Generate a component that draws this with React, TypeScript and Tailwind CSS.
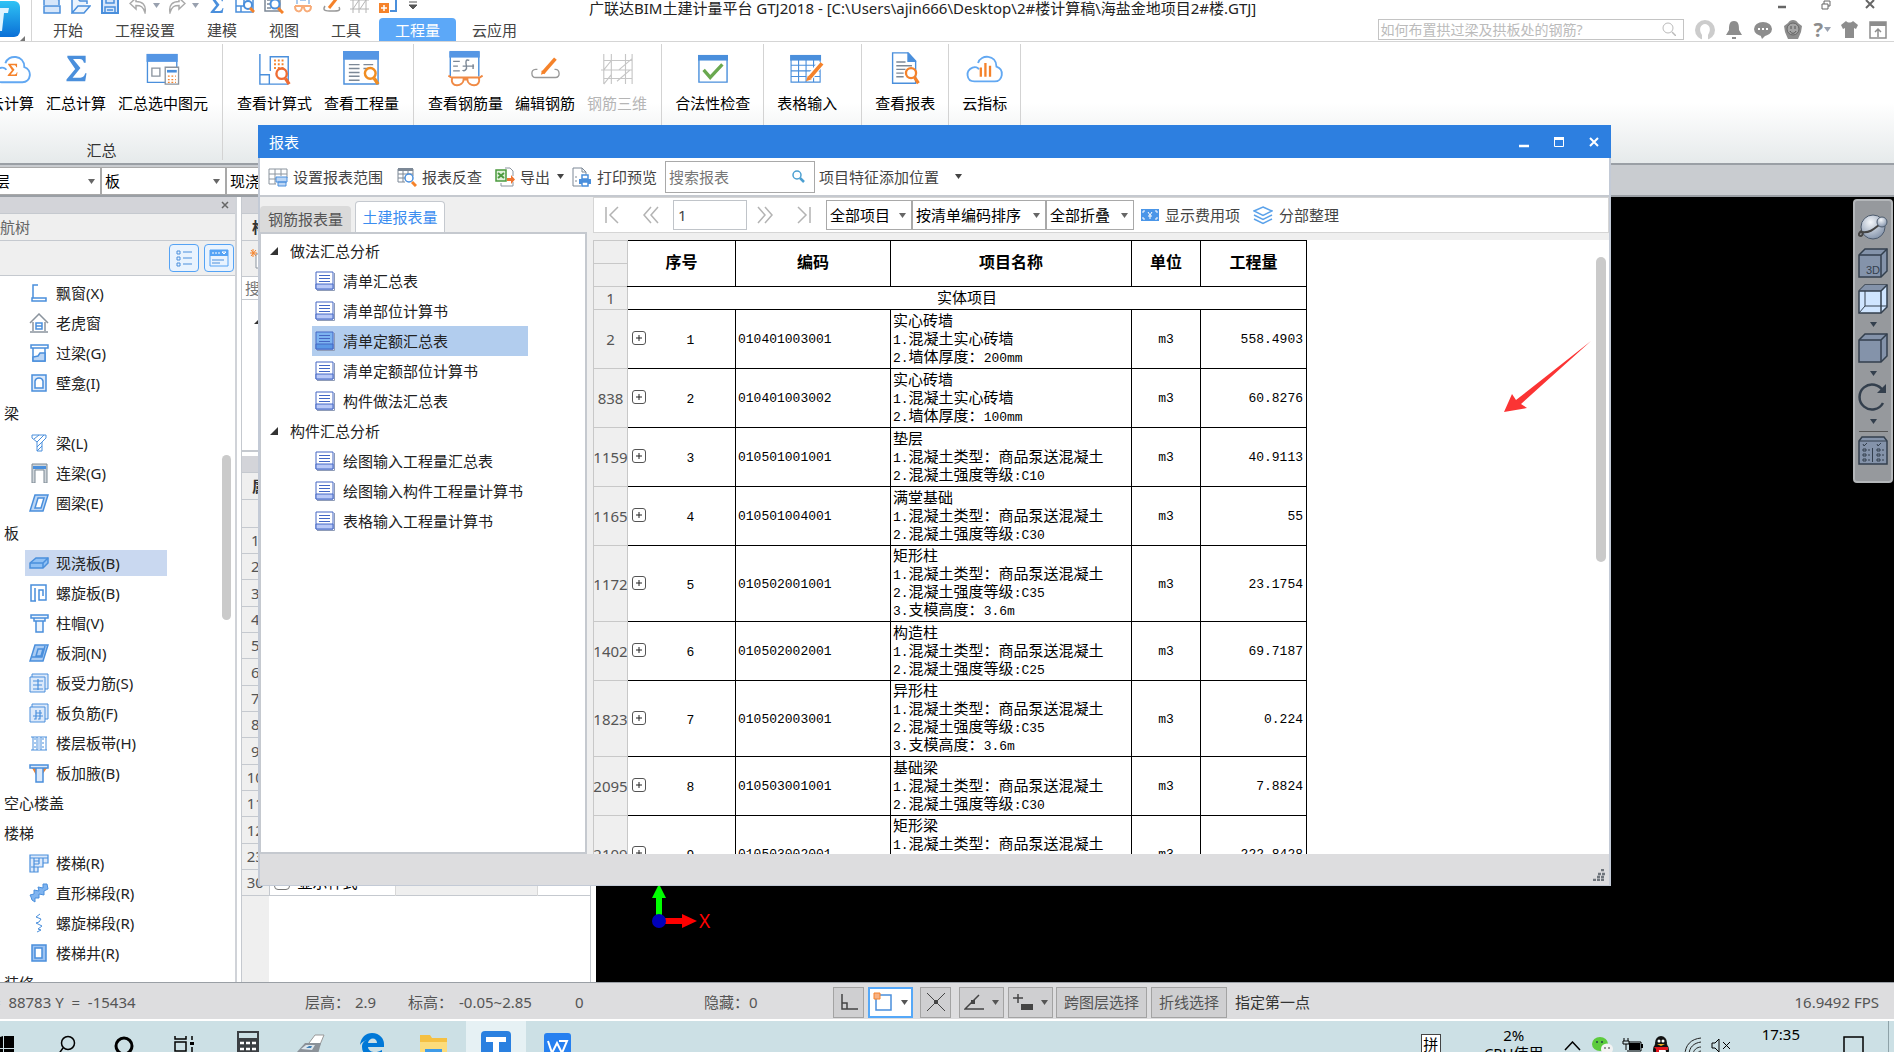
import React from 'react';
import clsx from 'clsx';

type IconProps = { className?: string };

const BLUE = '#4a8fdc';
const ORANGE = '#f5822a';

const Caret = ({ className }: IconProps) => (
  <svg className={clsx('shrink-0', className)} width="7" height="5" viewBox="0 0 7 5" aria-hidden="true">
    <path d="M0 0h7L3.5 5z" fill="currentColor" />
  </svg>
);

const Svg = ({ w = 20, h = 20, box, children, className }: { w?: number; h?: number; box?: string; children: React.ReactNode; className?: string }) => (
  <svg className={clsx('shrink-0', className)} width={w} height={h} viewBox={box ?? `0 0 ${w} ${h}`} fill="none" aria-hidden="true">
    {children}
  </svg>
);

const SIGMA = 'M2 1h21v8h-2c-.6-3-2-4.500-5-4.500H8.500L17 15 8 26h9c3 0 4.500-1.500 5.500-5H24l-1.500 9H1v-2l10-12L2 3z';

/* ---------- quick access bar ---------- */

const quickIcons: { x: React.ReactNode; gap: string }[] = [
  { gap: 'ml-0', x: <Svg w={18} h={18}><path d="M1 9V1h10l5 3v5M1 10h16v7H1z" stroke={BLUE} strokeWidth="1.5" fill="#d6e6fa" /></Svg> },
  { gap: 'ml-[10px]', x: <Svg w={20} h={18}><path d="M1 17V3h6l2 2h7v3M1 17l6-7h12l-6 7z" stroke={BLUE} strokeWidth="1.5" fill="#eaf3fd" /></Svg> },
  { gap: 'ml-[10px]', x: <Svg w={18} h={18}><path d="M1 1h16v16H1z" fill="#d6e6fa" stroke={BLUE} strokeWidth="2" /><path d="M5 1v6h8V1M4 17v-6h10v6M6 14h6" stroke={BLUE} strokeWidth="1.500" /></Svg> },
  { gap: 'ml-[10px]', x: <Svg w={18} h={18}><path d="M7 2 1 7.500 7 13v-3.500c5 0 7 1 9 7 1.500-8-3-11-9-11z" stroke="#aaa" strokeWidth="1.500" /></Svg> },
  { gap: 'ml-[6px]', x: <Caret className="text-gray-400" /> },
  { gap: 'ml-[8px]', x: <Svg w={18} h={18}><path d="m11 2 6 5.500L11 13v-3.500c-5 0-7 1-9 7C.5 8.500 5 5.500 11 5.500z" stroke="#aaa" strokeWidth="1.500" /></Svg> },
  { gap: 'ml-[6px]', x: <Caret className="text-gray-400" /> },
  { gap: 'ml-[11px]', x: <Svg w={14} h={18} box="0 0 25 31"><path d={SIGMA} fill={BLUE} /></Svg> },
  { gap: 'ml-[11px]', x: <Svg w={20} h={18}><path d="M1 0v16h17V1H9v9H1M6 10v6" stroke={BLUE} strokeWidth="1.500" /><circle cx="13" cy="9" r="4" stroke={BLUE} strokeWidth="2" fill="#fff" /><path d="m15 12 4 4" stroke={ORANGE} strokeWidth="3" /></Svg> },
  { gap: 'ml-[9px]', x: <Svg w={20} h={18}><path d="M1 0v15h15V0M3 4h4M3 8h4M3 12h4" stroke="#7c8896" strokeWidth="1.500" /><circle cx="11" cy="8" r="4.500" stroke={BLUE} strokeWidth="2" fill="#fff" /><path d="m14 12 5 5" stroke={ORANGE} strokeWidth="3" /></Svg> },
  { gap: 'ml-[10px]', x: <Svg w={18} h={18}><path d="M3 8V0h12v8M6 4h6" stroke="#8fb9e8" strokeWidth="1.500" /><path d="M1 10h16M1 10c0 7 7 7 7 1h2c0 6 7 6 7-1" stroke="#f7ab78" strokeWidth="2" /></Svg> },
  { gap: 'ml-[11px]', x: <Svg w={18} h={18}><path d="M2 10c-3 5 1 5 7 5s9 0 7-4" stroke="#999" strokeWidth="1.500" /><path d="m6 12 8-10" stroke={ORANGE} strokeWidth="3" /></Svg> },
  { gap: 'ml-[9px]', x: <Svg w={20} h={18}><path d="M3 0v17M9 0v17M16 0v17M0 4h19M0 13h19M3 13l6-9M10 13l6-9" stroke="#b4b4b4" /></Svg> },
  { gap: 'ml-[9px]', x: <Svg w={18} h={18}><path d="M10 1h7v14h-6" stroke={BLUE} strokeWidth="2" /><path d="M0 7h10v10H0z" fill={ORANGE} /><path d="M5 9v6M2 12h6" stroke="#fff" strokeWidth="1.500" /></Svg> },
];

/* ---------- ribbon ---------- */

const Lens = ({ x, y, color = ORANGE }: { x: number; y: number; color?: string }) => (
  <>
    <circle cx={x} cy={y} r="5.500" stroke={color} strokeWidth="2.500" fill="#fff" />
    <path d={`m${x + 4} ${y + 5} 4 6`} stroke={color} strokeWidth="3.500" />
  </>
);

const CLOUD = 'M9 33h22c9 0 11-13 2-16 0-13-17-14-20-4M9 33c-9 0-10-12-2-15 3-1 6 0 7 2';

const ribbonGroups = [
  {
    label: '汇总', cls: '-ml-[25px] px-2',
    items: [
      { t: '云计算', i: <Svg w={38} h={36} box="0 0 40 38"><path d={CLOUD} stroke="#62a8f2" strokeWidth="2" /><g transform="translate(15 13) scale(.45)"><path d={SIGMA} fill={ORANGE} /></g></Svg> },
      { t: '汇总计算', i: <Svg w={23} h={27} box="0 0 25 31"><path d={SIGMA} fill={BLUE} /></Svg> },
      { t: '汇总选中图元', i: <Svg w={36} h={32} box="0 0 37 36"><path d="M1 2h33v31H1z" stroke={BLUE} strokeWidth="1.500" /><path d="M0 1h35v9H0z" fill="#5596e4" /><path d="M6 17h9v9H6z" stroke="#8b949e" strokeWidth="1.500" /><path d="M21 16h15v19H21z" fill="#fff" stroke="#8b949e" strokeWidth="1.500" /><path d="M23 19h11v3H23z" fill={BLUE} /><path d="M24 26h9M24 30h9M24 33h9" stroke={ORANGE} strokeWidth="1.500" strokeDasharray="2 2" /></Svg> },
    ],
  },
  {
    label: '', cls: 'px-2',
    items: [
      { t: '查看计算式', i: <Svg w={34} h={34} box="0 0 36 36"><path d="M2 2v32h30M2 24h10v10M13 20V5h19v29" stroke={BLUE} strokeWidth="1.500" /><path d="M17 9h12M17 13h12M17 17h12" stroke={ORANGE} strokeWidth="2" strokeDasharray="2 2" /><Lens x={25} y={23} color="#ef6c33" /></Svg> },
      { t: '查看工程量', i: <Svg w={37} h={37} box="0 0 38 38"><path d="M1 2h35v33H1z" stroke={BLUE} strokeWidth="1.500" /><path d="M0 1h37v9H0z" fill="#5596e4" /><path d="M6 15h11M6 19h11M6 23h11M6 27h11M6 31h11M21 15h10M21 19h6" stroke="#7c8896" strokeWidth="1.500" /><Lens x={28} y={24} color="#f08d22" /></Svg> },
    ],
  },
  {
    label: '', cls: 'px-2',
    items: [
      { t: '查看钢筋量', i: <Svg w={37} h={38} box="0 0 38 40"><path d="M3 2v26M33 2v26" stroke={BLUE} strokeWidth="1.500" /><path d="M2 1h32v7H2z" fill="#5596e4" /><path d="M6 12h7M6 17h5M6 22h7M16 17h12M23 11c-4-2-4 2-3 6s-3 6-4 4M27 15v5" stroke="#7c8896" strokeWidth="1.500" /><path d="M4 29h30l3-2M4 29l-3-2M5 29c-3 11 12 10 12 2h4c0 8 15 9 12-2" stroke="#f08a45" strokeWidth="2" /></Svg> },
      { t: '编辑钢筋', i: <Svg w={31} h={27} box="0 0 32 30"><path d="M7 16H5c-6 0-5 9 0 9h22c6 0 5-9 0-9h-1" stroke="#999" strokeWidth="1.500" /><path d="m13 20 14-16" stroke={ORANGE} strokeWidth="4" /><path d="m11 22 1-5 4 3z" fill={ORANGE} /></Svg> },
      { t: '钢筋三维', off: true, i: <Svg w={36} h={34} box="0 0 36 36"><path d="M4 2v32M12 2v32M27 2v32M34 2v32M4 9h30M1 19h33M4 28h30M4 19l8-10M4 34l8-10M20 19l14-12M18 31l14-12" stroke="#c6c6c6" strokeWidth="1.200" /></Svg> },
    ],
  },
  {
    label: '', cls: 'px-[7px]',
    items: [{ t: '合法性检查', i: <Svg w={32} h={30} box="0 0 34 32"><path d="M2 2h30v28H2z" stroke={BLUE} strokeWidth="1.500" /><path d="M1 1h32v6H1z" fill={BLUE} /><path d="m7 17 7 8 13-14" stroke="#6aa84f" strokeWidth="3.500" /></Svg> }],
  },
  {
    label: '', cls: 'pl-[7px] pr-[18px]',
    items: [{ t: '表格输入', i: <Svg w={36} h={30} box="0 0 36 32"><path d="M1 2h31v28H1zM1 12h31M1 18h31M1 24h31M9 6v24M17 6v24M25 6v24" stroke={BLUE} strokeWidth="1.200" /><path d="M0 1h33v6H0z" fill={BLUE} /><path d="m20 26 13-16" stroke="#fff" strokeWidth="7" /><path d="m21 25 13-15" stroke={ORANGE} strokeWidth="4" /><path d="m17 29 2-6 4 4z" fill={ORANGE} /></Svg> }],
  },
  {
    label: '', cls: 'px-[7px]',
    items: [{ t: '查看报表', i: <Svg w={31} h={35} box="0 0 32 38"><path d="M2 2h17l8 9v24H2z" stroke={BLUE} strokeWidth="1.500" /><path d="M18 1v11h10z" fill={BLUE} /><path d="M6 12h10M6 16h17M6 20h10M6 24h8M6 28h8" stroke="#7c8896" strokeWidth="1.500" /><Lens x={22} y={24} /></Svg> }],
  },
  {
    label: '', cls: 'px-[7px]',
    items: [{ t: '云指标', i: <Svg w={39} h={35} box="0 0 40 38"><path d={CLOUD} stroke="#62a8f2" strokeWidth="2" /><path d="M16 18v10M21 13v15M26 16v12" stroke={ORANGE} strokeWidth="2.500" /></Svg> }],
  },
];

const ribbonTabs = ['开始', '工程设置', '建模', '视图', '工具', '工程量', '云应用'];

/* ---------- navigation tree ---------- */

const S = { stroke: BLUE, strokeWidth: 1.5 };

const navItems: { t: string; i?: React.ReactNode; on?: boolean }[] = [
  { t: '飘窗(X)', i: <path d="M9 2H4v13M3 15h14v3H3z" {...S} /> },
  { t: '老虎窗', i: <><path d="m1 10 9-9 9 9M4 9v9M16 9v9M1 19h18" stroke="#8b949e" strokeWidth="1.5" /><path d="M7 10h6v6H7zM7 13h6" {...S} /></> },
  { t: '过梁(G)', i: <><path d="M2 2h17v3H2zM4 5v13h12V5" {...S} /><path d="M4 18v-4l5-1 2-3h5v8z" fill="#bcd6f5" {...S} /></> },
  { t: '壁龛(I)', i: <><path d="M3 2h14v16H3z" fill="#dce9fa" {...S} /><path d="M6 15V8c1-4 7-4 8 0v7z" fill="#fff" {...S} /></> },
  { t: '梁' },
  { t: '梁(L)', i: <path d="M3 2h14v3l-4 4v9H8V9L3 5zM5 6l5-4M8 9l7-7M8 14l5-5M8 18l5-5" stroke={BLUE} /> },
  { t: '连梁(G)', i: <><path d="M3 1h15v19h-3V7H6v13H3z" fill="#cfd5da" stroke="#7d8994" /><path d="M4 3h13v3H4z" fill={BLUE} /></> },
  { t: '圈梁(E)', i: <><path d="M6 2h13l-5 16H1z" fill="#bcd6f5" {...S} /><path d="M9 5h6l-3 10H6z" fill="#fff" {...S} /></> },
  { t: '板' },
  { t: '现浇板(B)', on: true, i: <><path d="m1 10 6-5h12v5l-5 5H1z" fill="#8fc0f5" {...S} /><path d="M1 10h13l5-5M14 10v5" {...S} /></> },
  { t: '螺旋板(B)', i: <path d="M7 18H2V2h15v15h-7V7h4v6M6 18V5" {...S} /> },
  { t: '柱帽(V)', i: <path d="M2 2h17v3H2zM5 5v3h11V5M7 8v11h7V8" fill="#eef5fd" {...S} /> },
  { t: '板洞(N)', i: <><path d="M6 2h13l-5 16H1z" fill="#a9cbf3" {...S} /><path d="M9 6h5l-2 7H7zM3 14h10l3-11" {...S} /></> },
  { t: '板受力筋(S)', i: <><path d="M3 4V1h16v15h-3" fill="#dce9fa" stroke={BLUE} /><path d="M1 4h15v15H1z" fill="#dce9fa" stroke={BLUE} /><path d="M4 8h10M4 12h9M4 16h10M9 6v11" stroke={BLUE} strokeWidth="1.200" /></> },
  { t: '板负筋(F)', i: <><path d="M3 4V1h16v15h-3" fill="#dce9fa" stroke={BLUE} /><path d="M1 4h15v15H1z" fill="#dce9fa" stroke={BLUE} /><path d="M4 13h10M7 7v9H5M11 7v9H9M7 10h6" stroke={BLUE} strokeWidth="1.200" /></> },
  { t: '楼层板带(H)', i: <><path d="M2 4h16M2 17h16M4 4v13M8 4v13M12 4v13M17 4v13" stroke={BLUE} strokeWidth="1" /><path d="M6 5v12M14 5v12" stroke={BLUE} strokeDasharray="2 2" /><path d="M9 4h2v13H9z" fill="#bcd6f5" /></> },
  { t: '板加腋(B)', i: <><path d="M3 5h15l-5 7V6H7v6z" fill={ORANGE} /><path d="M1 2h18v3H1zM7 5v14h7V5z" fill="#dce9fa" {...S} /></> },
  { t: '空心楼盖' },
  { t: '楼梯' },
  { t: '楼梯(R)', i: <path d="M1 2h18v8h-5v4H9v5H1zM1 5h18M5 5v14M10 5v6M14 5v5M5 8h5M5 11h5M2 14h8" fill="#dce9fa" stroke={BLUE} strokeWidth="1.200" /> },
  { t: '直形梯段(R)', i: <path d="m1 12 4-1v-4l5 1-1-4 5 1V1h4l1 5-4 2v4l-5-1v4l-4 0v4l-3-2-1-3z" fill="#7fb4f0" stroke={BLUE} /> },
  { t: '螺旋梯段(R)', i: <path d="M11 1 7 4l5 2-2 3-3 1 6 3-4 3 3 1-4 2" stroke={BLUE} /> },
  { t: '楼梯井(R)', i: <><path d="M3 2h14v16H3z" fill="#9cc3f2" {...S} /><path d="M6 5h7v10H6z" fill="#fff" {...S} /></> },
  { t: '装修' },
];

const NavPanel = () => (
  <aside className="flex w-[237px] shrink-0 flex-col overflow-hidden border-r-2 border-[#d0d3d8] bg-white">
    <div className="flex h-4 items-center justify-end bg-[#d3d4d9] pr-1.5">
      <button aria-label="关闭" className="flex">
        <Svg w={8} h={8}><path d="m1 1 6 6M7 1 1 7" stroke="#666" strokeWidth="1.500" /></Svg>
      </button>
    </div>
    <h2 className="flex h-7 items-center border-y border-[#c5c9cf] bg-[#efefef] text-[#666]">
      <span className="-ml-[15px]">导航树</span>
    </h2>
    <div className="flex h-[35px] shrink-0 items-center justify-end gap-[5px] border-b border-[#c5c9cf] bg-[#efefef] pr-px">
      <button aria-label="列表" className="flex h-7 w-[30px] items-center justify-center rounded border border-[#55a3f5] bg-[#e9f3fe]">
        <Svg w={16} h={18}><path d="M1 2h3v3H1zM1 8h3v3H1zM1 14h3v3H1zM7 3h9M7 9h9M7 15h9" stroke={BLUE} /></Svg>
      </button>
      <button aria-label="窗口" className="flex h-7 w-[30px] items-center justify-center rounded border border-[#55a3f5] bg-[#e9f3fe]">
        <Svg w={20} h={18}><path d="M1 1h18v16H1z" stroke="#55a3f5" /><path d="M1 1h18v6H1z" fill="#55a3f5" /><path d="M4 3v2M7 3v2M10 3v2M13 3h4l-2 2z" stroke="#fff" /><path d="M3 11h12M3 14h8" stroke={BLUE} /></Svg>
      </button>
    </div>
    <div className="flex min-h-0 flex-1">
      <ul className="flex-1 overflow-hidden pt-0.5">
        {navItems.map((n, k) => (
          <li key={k} className={clsx('flex h-[30px] items-center', n.i ? 'pl-[25px]' : 'pl-1')}>
            {n.i ? (
              <button className={clsx('flex h-[26px] items-center gap-[7px] pl-1', n.on && 'w-[142px] bg-[#c9d8f0]')}>
                <Svg>{n.i}</Svg>
                <span>{n.t}</span>
              </button>
            ) : (
              <span>{n.t}</span>
            )}
          </li>
        ))}
      </ul>
      <div className="w-[13px] pt-[179px]">
        <div className="h-[165px] w-[9px] rounded-full bg-[#cacaca]" />
      </div>
    </div>
  </aside>
);

const propRows = ['1', '2', '3', '4', '5', '6', '7', '8', '9', '10', '11', '12', '23', '30'];

const PropertyPanel = () => (
  <section className="ml-1 flex w-[350px] shrink-0 flex-col overflow-hidden border-x border-[#c5c9cf] bg-white">
    <div className="h-4 shrink-0 bg-[#d3d4d9]" />
    <h2 className="flex h-7 shrink-0 items-center border-y border-[#c5c9cf] bg-[#efefef] pl-2.5 font-bold text-[#333]">构件列表</h2>
    <div className="flex h-[35px] shrink-0 items-center bg-[#efefef] pl-2">
      <Svg w={20}><path d="M6 5h12v14H6z" fill="#fff" stroke="#8b949e" /><path d="M3 0v8M0 4h7M1 1l5 6M6 1 1 7" stroke={ORANGE} /></Svg>
    </div>
    <input aria-label="搜索构件" placeholder="搜索构件..." className="h-6 shrink-0 border-y border-[#c5c9cf] pl-[3px] placeholder:text-[#777]" />
    <div className="h-[152px] shrink-0 border-b-2 border-[#c5c9cf] pl-3 pt-4">
      <Svg w={8} h={8}><path d="M8 0v8H0z" fill="#333" /></Svg>
    </div>
    <div className="mt-1 h-4 shrink-0 bg-[#d3d4d9]" />
    <h2 className="flex h-7 shrink-0 items-center border-y border-[#c5c9cf] bg-[#efefef] pl-2.5 font-bold text-[#333]">属性列表</h2>
    <div className="flex-1 bg-linear-to-r from-[#efefef] from-[27px] to-white to-[27px]">
      <table className="w-full table-fixed border-collapse">
        <thead>
          <tr className="h-[27px] border-b border-[#c5c9cf] bg-[#efefef]">
            <th className="w-[27px]" />
            <th className="w-[126px]" />
            <th className="w-[142px]" />
            <th />
          </tr>
        </thead>
        <tbody>
          {propRows.map(r => (
            <tr key={r} className="h-[26px] border-b border-[#c5c9cf] leading-5 text-[#555] nth-[3n]:h-[27px]">
              <td className="border-r border-[#c5c9cf] bg-[#efefef] p-0 text-center">{r}</td>
              <td className="border-r border-[#d8d8d8] p-0 text-black">
                {r === '30' && (
                  <label className="flex items-center gap-2 pl-1">
                    <input type="checkbox" className="size-4 appearance-none rounded border border-[#777] bg-white" />
                    显示样式
                  </label>
                )}
              </td>
              <td className="border-r border-[#d8d8d8] bg-[#efefef]" />
              <td />
            </tr>
          ))}
        </tbody>
      </table>
    </div>
  </section>
);

/* ---------- viewport ---------- */

const Cube = ({ glass }: { glass?: boolean }) => (
  <>
    <path d="m1 7 6-6h22v22l-6 6H1z" fill={glass ? '#cfe5ff' : '#8493aa'} stroke="#333f4d" strokeWidth="1.5" />
    {glass && <path d="m1 7 6-6h22l-6 6z" fill="#8493aa" />}
    <path d="M1 7h22v22M23 7l6-6" stroke="#333f4d" strokeWidth="1.5" />
    {glass && <path d="M7 7v15h22M7 22l-6 7" stroke="#333f4d" />}
  </>
);

const Viewport = () => (
  <main className="relative ml-[5px] flex-1 bg-black">
    <svg className="absolute bottom-[34px] left-[49px]" width="80" height="100" viewBox="0 0 80 100" aria-hidden="true">
      <path d="M14 70V46" stroke="#0f0" strokeWidth="6" />
      <path d="M14 73h24" stroke="#f00" strokeWidth="6" />
      <path d="m7 50 7-14 7 14z" fill="#0f0" />
      <path d="m37 66 15 7-15 7z" fill="#f00" />
      <circle cx="14" cy="73" r="7" fill="#00b" />
      <text x="54" y="80" fill="#f00" fontSize="19" fontFamily="Noto Sans">X</text>
    </svg>
    <div className="absolute right-px top-0.5 flex h-[284px] w-10 flex-col items-center rounded-sm border-2 border-[#b4b7ba] bg-[#96999d] pt-3 text-[#333f4d]">
      <Svg w={30} h={28}>
        <defs>
          <radialGradient id="ball" cx=".4" cy=".3" r=".8"><stop stopColor="#f4f7fb" /><stop offset="1" stopColor="#7889a2" /></radialGradient>
        </defs>
        <circle cx="15" cy="14" r="12" fill="url(#ball)" stroke="#4d5b6d" />
        <path d="M4 18c-4 2-4 5-1 5 3-1 1-4 1-4 8 1 12-3 17-7" stroke="#444" strokeWidth="2" />
        <circle cx="24" cy="9" r="5" fill="url(#ball)" stroke="#4d5b6d" />
      </Svg>
      <Svg w={30} h={30} className="mt-[7px]"><Cube /><text x="8" y="26" fill="#333f4d" fontSize="11" fontFamily="Liberation Sans">3D</text></Svg>
      <Svg w={30} h={30} className="mt-1.5"><Cube glass /></Svg>
      <Caret className="mt-2" />
      <Svg w={30} h={30} className="mt-[6px]"><Cube /></Svg>
      <Caret className="mt-2" />
      <Svg w={30} h={28} className="mt-[7px]"><path d="M25 20A12.500 12.500 0 1 1 25 8" stroke="#333f4d" strokeWidth="2.500" /><path d="M28 1v9h-9z" fill="#333f4d" /></Svg>
      <Caret className="mt-2" />
      <div className="mt-[7px] h-px w-[29px] bg-[#555]" />
      <Svg w={30} h={30} className="mt-1">
        <path d="m1 5 3-4h22l3 4v23H1z" fill="#8493aa" stroke="#333f4d" strokeWidth="1.500" />
        <path d="M1 5h28M14.500 12v14M5 8l1 2 3-3M19 8l1 2 3-3M5 13h3v2H5zM5 18h3v2H5zM5 23h3v2H5zM19 13h3v2h-3zM19 18h3v2h-3zM19 23h3v2h-3zM10 14h2M10 19h2M10 24h2M24 14h2M24 19h2M24 24h2" stroke="#333f4d" />
      </Svg>
    </div>
  </main>
);

/* ---------- report dialog ---------- */

const reportTree = [
  { t: '做法汇总分析', kids: ['清单汇总表', '清单部位计算书', '清单定额汇总表', '清单定额部位计算书', '构件做法汇总表'] },
  { t: '构件汇总分析', kids: ['绘图输入工程量汇总表', '绘图输入构件工程量计算书', '表格输入工程量计算书'] },
];

const conc = '1.混凝土类型：商品泵送混凝土';

const reportRows = [
  { id: '2', n: 1, code: '010401003001', lines: ['实心砖墙', '1.混凝土实心砖墙', '2.墙体厚度：200mm'], q: '558.4903' },
  { id: '838', n: 2, code: '010401003002', lines: ['实心砖墙', '1.混凝土实心砖墙', '2.墙体厚度：100mm'], q: '60.8276' },
  { id: '1159', n: 3, code: '010501001001', lines: ['垫层', conc, '2.混凝土强度等级:C10'], q: '40.9113' },
  { id: '1165', n: 4, code: '010501004001', lines: ['满堂基础', conc, '2.混凝土强度等级:C30'], q: '55' },
  { id: '1172', n: 5, code: '010502001001', lines: ['矩形柱', conc, '2.混凝土强度等级:C35', '3.支模高度：3.6m'], q: '23.1754' },
  { id: '1402', n: 6, code: '010502002001', lines: ['构造柱', conc, '2.混凝土强度等级:C25'], q: '69.7187' },
  { id: '1823', n: 7, code: '010502003001', lines: ['异形柱', conc, '2.混凝土强度等级:C35', '3.支模高度：3.6m'], q: '0.224' },
  { id: '2095', n: 8, code: '010503001001', lines: ['基础梁', conc, '2.混凝土强度等级:C30'], q: '7.8824' },
  { id: '2109', n: 9, code: '010503002001', lines: ['矩形梁', conc, '2.混凝土强度等级:C30', '3.支模高度：3.6m'], q: '222.8428' },
];

// Latin runs are set in a monospace face, Chinese ones in the page font
const Mixed = ({ text }: { text: string }) => (
  <>
    {text.split(/([\x20-\x7e]+)/).filter(Boolean).map((part, k) =>
      /^[\x20-\x7e]/.test(part)
        ? <span key={k} className="font-['Liberation_Mono',monospace] text-[13px] leading-none">{part}</span>
        : part
    )}
  </>
);

const ReportTable = () => (
  <table className="w-[713px] shrink-0 table-fixed border-collapse self-start text-black">
    <colgroup>
      <col className="w-[34px]" />
      <col className="w-[108px]" />
      <col className="w-[155px]" />
      <col className="w-[241px]" />
      <col className="w-[69px]" />
      <col className="w-[106px]" />
    </colgroup>
    <thead>
      <tr className="h-[23px]">
        <td className="border border-[#c8c8c8] bg-[#efefef]" />
        {['序号', '编码', '项目名称', '单位', '工程量'].map((h, k) => (
          <th key={h} rowSpan={2} className={clsx('border-y border-r border-black p-0 pb-1 text-base', k > 0 && 'border-l')}>{h}</th>
        ))}
      </tr>
      <tr className="h-[23px]">
        <td className="border border-[#c8c8c8] bg-[#efefef]" />
      </tr>
    </thead>
    <tbody>
      <tr className="h-[23px] leading-[18px]">
        <th className="border border-[#c8c8c8] bg-[#efefef] p-0 font-normal text-[#555]">1</th>
        <td colSpan={5} className="border-y border-r border-black p-0 pb-0.5 text-center">实体项目</td>
      </tr>
      {reportRows.map(r => (
        <tr key={r.id} className={clsx('leading-[18px]', r.lines.length > 3 ? 'h-[76px]' : 'h-[59px]')}>
          <th className="border border-[#c8c8c8] bg-[#efefef] p-0 font-normal text-[#555]"><div className="-mx-1">{r.id}</div></th>
          <td className="border-y border-r border-black p-0 pb-0.5">
            <div className="flex items-center pl-1">
              <button aria-label="展开" className="flex size-3.5 items-center justify-center rounded-[3px] border border-[#555]">
                <Svg w={8} h={8}><path d="M4 1v6M1 4h6" stroke="#222" /></Svg>
              </button>
              <span className="flex-1 text-center"><Mixed text={String(r.n)} /></span>
            </div>
          </td>
          <td className="border border-black p-0 pb-1 pl-0.5"><Mixed text={r.code} /></td>
          <td className="whitespace-nowrap border border-black p-0 pb-[3px] pl-0.5">
            {r.lines.map(l => <div key={l} className="h-[18px]"><Mixed text={l} /></div>)}
          </td>
          <td className="border border-black p-0 pb-1 text-center"><Mixed text="m3" /></td>
          <td className="border border-black p-0 pb-1 pr-[3px] text-right"><Mixed text={r.q} /></td>
        </tr>
      ))}
    </tbody>
  </table>
);

const Picker = ({ label, value, className }: { label: string; value: string; className: string }) => (
  <div className={clsx('relative shrink-0', className)}>
    <select aria-label={label} className="size-full appearance-none border border-[#a9a9a9] bg-white pl-[3px] text-black">
      <option>{value}</option>
    </select>
    <Caret className="pointer-events-none absolute right-1.5 top-1/2 -mt-0.5 text-[#666]" />
  </div>
);

const PageButton = ({ label, d }: { label: string; d: string }) => (
  <button aria-label={label} className="flex w-[39px] shrink-0 items-center justify-center pr-[3px]">
    <Svg w={16} h={18}><path d={d} stroke="#b3b3b3" strokeWidth="1.5" /></Svg>
  </button>
);

const ReportDialog = () => (
  <div role="dialog" aria-label="报表" className="absolute bottom-[166px] left-[258px] right-[283px] top-[125px] flex flex-col border-x-2 border-b border-[#c3cad6] bg-[#efefef]">
    <header className="-mx-0.5 flex h-[33px] shrink-0 items-center bg-[#2d7fe0] pl-[11px] text-white">
      <h1 className="flex-1">报表</h1>
      <button aria-label="最小化" className="flex w-[35px] justify-center"><Svg w={12} h={12}><path d="M1 10h10" stroke="#fff" strokeWidth="2.500" /></Svg></button>
      <button aria-label="最大化" className="flex w-[35px] justify-center"><Svg w={12} h={12}><path d="M1.500 2h9v8.500h-9z" stroke="#fff" /><path d="M1 1h10v3H1z" fill="#fff" /></Svg></button>
      <button aria-label="关闭" className="flex w-[35px] justify-center"><Svg w={12} h={12}><path d="m2 2 8 8M10 2l-8 8" stroke="#fff" strokeWidth="2" /></Svg></button>
    </header>
    <div className="flex h-[39px] shrink-0 items-center border-b-2 border-[#c5c9cf] bg-white pl-2 text-[#444]">
      <button className="flex items-center gap-[5px]">
        <Svg><path d="M1 2h18v9M1 2v15h7M1 7h18M1 12h7M7 2v15M13 2v7" stroke="#8b949e" /><path d="M8 10h11v5H8zM10 15h8v4h-8z" fill="#bcd6f5" stroke={BLUE} /></Svg>
        设置报表范围
      </button>
      <button className="ml-[14px] flex items-center gap-[5px]">
        <Svg><path d="M1 2h15v7M1 2v13h7M1 7h15M1 11h7M6 2v13M11 2v6" stroke="#7c8896" /><path d="M1 1h15v3H1z" fill="#7c8896" /><circle cx="12" cy="11" r="4" stroke={BLUE} strokeWidth="1.500" fill="#fff" /><path d="m15 15 4 4" stroke={ORANGE} strokeWidth="3" /></Svg>
        报表反查
      </button>
      <button className="ml-[13px] flex items-center gap-[5px]">
        <Svg><path d="M10 1h5l3 3v5M18 15v4H6v-3" stroke="#8b949e" /><path d="M1 3h10v11H1z" fill="#dff0da" stroke="#4c9a3f" strokeWidth="1.500" /><path d="m3 6 6 5M9 6l-6 5" stroke="#4c9a3f" strokeWidth="2" /><path d="M12 11h4V8l4 4.500-4 4.500v-3h-4z" fill="#ef7430" /></Svg>
        导出
        <Caret className="ml-0.5" />
      </button>
      <button className="ml-[8px] flex items-center gap-[5px]">
        <Svg><path d="M9 19H1V1h9l4 4v3M10 1v4h4M4 9v2M4 13v2" stroke="#7c8896" /><path d="M7 12h12v5H7z" fill={BLUE} /><path d="M10 8h6v4h-6zM10 15h6v4h-6z" fill="#fff" stroke={BLUE} strokeWidth="1.500" /></Svg>
        打印预览
      </button>
      <div className="relative ml-[8px] h-8 w-[150px]">
        <input aria-label="搜索报表" placeholder="搜索报表" className="size-full border border-[#a9a9a9] pl-[3px] placeholder:text-[#777]" />
        <Svg w={14} h={14} className="absolute right-2.5 top-2"><circle cx="6" cy="6" r="4" stroke="#4b9fd1" strokeWidth="1.500" /><path d="m9 9 4 4" stroke="#4b9fd1" strokeWidth="2.500" /></Svg>
      </div>
      <button className="ml-[4px] flex items-center gap-4">
        项目特征添加位置
        <Caret />
      </button>
    </div>

    <div className="flex min-h-0 flex-1">
      <div className="flex w-[327px] shrink-0 flex-col">
        <div className="flex h-[35px] items-end gap-1" role="tablist">
          <button role="tab" className="h-[26px] w-[91px] rounded-t bg-[#dadada] text-[#555]">钢筋报表量</button>
          <button role="tab" aria-selected="true" className="h-[31px] w-[90px] rounded-t border-x border-t border-[#c5c9cf] bg-white text-[#3b8df0]">土建报表量</button>
        </div>
        <div className="flex-1 border-2 border-l border-[#c5c9cf] bg-white pl-2 pt-0.5">
          {reportTree.map(g => (
            <div key={g.t}>
              <div className="flex h-[30px] items-center gap-3 pl-px">
                <Svg w={8} h={8}><path d="M8 0v8H0z" fill="#333" /></Svg>
                {g.t}
              </div>
              <ul>
                {g.kids.map(k => (
                  <li key={k} className="h-[30px] pl-[43px]">
                    <button className={clsx('flex h-[30px] w-[216px] items-center gap-2 whitespace-nowrap pl-[3px]', k === '清单定额汇总表' && 'bg-[#b2cdee]')}>
                      <Svg>
                        <path d="M2 19.500h17.500V2" stroke="#8f9cb8" />
                        <path d="M1 1h17v17H1z" fill={k === '清单定额汇总表' ? '#7db3f0' : '#fff'} stroke="#4467c4" />
                        <path d="M1 13h17v5H1z" fill={k === '清单定额汇总表' ? '#5b98e6' : '#b9c9f7'} stroke="#4467c4" />
                        <path d="M4 4.500h11M4 7.500h11M4 10.500h11" stroke="#4467c4" />
                      </Svg>
                      {k}
                    </button>
                  </li>
                ))}
              </ul>
            </div>
          ))}
        </div>
      </div>

      <div className="ml-1.5 flex min-w-0 flex-1 flex-col">
        <div className="flex h-9 shrink-0 items-stretch border border-[#d5d5d5] bg-white py-0.5 text-[#444]">
          <PageButton label="首页" d="M2 1v16M14 1 6 9l8 8" />
          <PageButton label="上一页" d="M8 1 1 9l7 8M15 1 8 9l7 8" />
          <input aria-label="页码" defaultValue="1" className="ml-px w-[74px] shrink-0 border border-[#c0c4c9] pl-1" />
          <PageButton label="下一页" d="m1 1 7 8-7 8M8 1l7 8-7 8" />
          <PageButton label="末页" d="M14 1v16M2 1l8 8-8 8" />
          <Picker label="项目范围" value="全部项目" className="ml-px w-[86px]" />
          <Picker label="排序方式" value="按清单编码排序" className="w-[134px]" />
          <Picker label="折叠方式" value="全部折叠" className="w-[88px]" />
          <button className="ml-[7px] flex shrink-0 items-center gap-1.5">
            <Svg w={18} h={14}><path d="M0 1h18v12H0z" fill="#4a96e8" /><path d="m7 4 2 3 2-3M9 7v4M7 8h4M2 3h2M2 11h2M14 3h2M14 11h2M2 3v2M16 3v2M2 9v2M16 9v2" stroke="#fff" /></Svg>
            显示费用项
          </button>
          <button className="ml-[13px] flex shrink-0 items-center gap-1.5">
            <Svg><path d="m10 2 9 4-9 4.500L1 6zM1 10l9 4.500L19 10M1 14l9 4.500L19 14" stroke="#5ba2ea" strokeWidth="1.500" /></Svg>
            分部整理
          </button>
        </div>
        <div className="mt-[7px] flex min-h-0 flex-1 justify-between overflow-hidden bg-white">
          <ReportTable />
          <div className="w-[13px] pt-[17px]">
            <div className="h-[305px] w-2.5 rounded-full bg-[#cacaca]" />
          </div>
        </div>
      </div>
    </div>

    <footer className="flex h-[31px] shrink-0 items-end justify-end bg-[#dddddf] p-1">
      <Svg w={12} h={12}><path d="M8 1h4M5 5h7M4 8h8M0 11h12" stroke="#6f757c" strokeWidth="2.500" strokeDasharray="3 1" /></Svg>
    </footer>

    <svg className="absolute right-[15px] top-[215px]" width="90" height="74" viewBox="0 0 90 74" aria-hidden="true">
      <path d="M87 1 17 64l6 4L0 72l8-18 4 6z" fill="#fb3434" />
    </svg>
  </div>
);

/* ---------- status bar and taskbar ---------- */

const toolBtn = 'flex h-[31px] shrink-0 items-center justify-center border border-[#a3a3a3] bg-[#cfcfd1] text-[#555]';

const StatusBar = () => (
  <div className="flex h-[38px] shrink-0 items-center border-b-2 border-white bg-[#dddddf] pt-0.5 text-[#555]">
    <span className="-ml-[8px] w-[313px] whitespace-pre">=  88783 Y  =  -15434</span>
    <span className="w-[50px]">层高：</span>
    <span className="w-[53px]">2.9</span>
    <span className="w-[51px]">标高：</span>
    <span className="w-[116px]">-0.05~2.85</span>
    <span className="w-[129px]">0</span>
    <span className="w-[45px]">隐藏：</span>
    <span className="w-[84px]">0</span>
    <button aria-label="正交" className={clsx(toolBtn, 'w-[31px]')}><Svg><path d="M3 2v15h16M3 11h5v6" stroke="#444" strokeWidth="1.500" /></Svg></button>
    <button aria-label="捕捉" className="ml-1 flex h-[31px] w-[45px] shrink-0 items-center justify-center gap-2 border-2 border-[#55a8f8] bg-white text-[#555]">
      <Svg><path d="M3 3h15v15H3z" stroke={BLUE} strokeWidth="1.500" /><path d="M1 1h6v6H1z" fill="#f7b183" stroke={ORANGE} /></Svg><Caret />
    </button>
    <button aria-label="交点" className={clsx(toolBtn, 'ml-[7px] w-[31px]')}><Svg><path d="m1 1 18 18M19 1 1 19" stroke="#444" /><path d="M8 8h4v4H8z" fill="#444" /></Svg></button>
    <button aria-label="角度" className={clsx(toolBtn, 'ml-2 w-[45px] gap-2')}><Svg><path d="M15 3 1 17h19" stroke="#444" strokeWidth="1.500" /><path d="M7 8h4v4H7z" fill="#444" /></Svg><Caret /></button>
    <button aria-label="偏移" className={clsx(toolBtn, 'ml-1 w-[45px] gap-2')}><Svg><path d="M5 2v9M0 6h10" stroke="#444" strokeWidth="1.500" /><path d="M8 12h12v6H8z" fill="#444" /></Svg><Caret /></button>
    <button className={clsx(toolBtn, 'ml-[3px] w-[91px]')}>跨图层选择</button>
    <button className={clsx(toolBtn, 'ml-1 w-[76px]')}>折线选择</button>
    <span className="ml-2 text-[#333]">指定第一点</span>
    <span className="ml-auto pr-[15px]">16.9492 FPS</span>
  </div>
);

const TaskBar = () => (
  <nav className="flex h-[31px] shrink-0 overflow-hidden bg-[#cce0e5] text-black">
    <button aria-label="开始" className="flex w-[30px] pt-[15px]"><Svg w={16} h={26}><path d="M0 1v11h3V0zM4 0v12h10V0zM0 13v12h3V13zM4 13v12h10V13z" fill="#000" /></Svg></button>
    <button aria-label="搜索" className="ml-[28px] flex pt-[14px]"><Svg w={18} h={22}><circle cx="10" cy="8" r="6.500" stroke="#000" strokeWidth="1.500" /><path d="m5 13-5 7" stroke="#000" strokeWidth="1.500" /></Svg></button>
    <button aria-label="Cortana" className="ml-[38px] flex pt-[14px]"><Svg w={20} h={22}><circle cx="10" cy="11" r="8" stroke="#000" strokeWidth="3" /></Svg></button>
    <button aria-label="任务视图" className="ml-[40px] flex pt-[14px]"><Svg w={21} h={22}><path d="M1 1v3h11V1M1 7h11v9H1zM1 22v-3h11v3M18 1v4M18 12v8" stroke="#000" strokeWidth="1.500" /><path d="M16 7h4v3h-4z" fill="#000" /></Svg></button>
    <button aria-label="计算器" className="ml-[42px] flex pt-[10px]"><Svg w={22} h={26}><path d="M0 0h22v26H0z" fill="#3b3f43" /><path d="M2 2h18v5H2z" fill="#cce0e5" /><path d="M3 12h4M9 12h4M15 12h4M3 18h4M9 18h4M15 18h4" stroke="#fff" strokeWidth="2.500" /></Svg></button>
    <button aria-label="扫描" className="ml-[38px] flex pt-[13px]"><Svg w={28} h={24}><path d="m12 9 6-8h9l-5 12z" fill="#fff" stroke="#999" /><path d="m0 18 8-9h16l-3 11-8 4z" fill="#8b9299" /><path d="m4 15 5-4h9l-3 5z" fill="#dce5ec" /><path d="m9 14 3-2h3l-1 2z" fill="#3f7fb5" /></Svg></button>
    <button aria-label="Edge" className="ml-[35px] flex pt-[12px]"><Svg w={24} h={25}><path d="M0 12C1 4 6 0 12 0c8 0 12 6 12 11v3H8c0 5 8 7 14 3v5c-8 5-20 2-20-8 0-4 2-6 5-7-3 1-5 2-7 5zm8-2h9c0-6-8-6-9 0z" fill="#0078d7" /></Svg></button>
    <button aria-label="文件资源管理器" className="ml-[36px] flex pt-[13px]"><Svg w={27} h={24}><path d="M0 1h10l2 3h15v20H0z" fill="#f5c042" /><path d="M0 8h27v16H0z" fill="#fcdc7b" /><path d="M5 15h17v9H5z" fill="#3f9be8" /></Svg></button>
    <button aria-label="GTJ" className="ml-[19px] flex w-[60px] justify-center bg-[#e6f1f4] pt-[10px]"><Svg w={30} h={28}><rect width="30" height="30" rx="4" fill="#2a80e0" /><path d="M5 6h20v5h-7v17h-6V11H5z" fill="#fff" /></Svg></button>
    <button aria-label="WPS" className="ml-[18px] flex pt-[12px]"><Svg w={27} h={26}><rect width="27" height="27" rx="3" fill="#2680f0" /><path d="m4 8 4 12 5-10 5 10 5-12h-8" stroke="#fff" strokeWidth="2" /></Svg></button>

    <div className="ml-auto flex pr-[5px]">
      <span className="mr-[2px] mt-[13px] flex h-6 w-5 justify-center border border-[#444] bg-white leading-[18px]">拼</span>
      <div className="ml-[40px] mt-[5px] flex w-[62px] flex-col items-center whitespace-nowrap leading-[18px]">
        <span>2%</span>
        <span>CPU使用</span>
      </div>
      <button aria-label="显示隐藏的图标" className="ml-[19px] flex pt-5"><Svg w={17} h={10}><path d="m1 9 7.500-8L16 9" stroke="#000" strokeWidth="1.500" /></Svg></button>
      <Svg w={21} h={20} className="ml-[11px] mt-[15px]"><ellipse cx="8" cy="8" rx="8" ry="7" fill="#5ccb3c" /><circle cx="5" cy="6" r="1" fill="#244" /><circle cx="10" cy="6" r="1" fill="#244" /><ellipse cx="15" cy="13" rx="6" ry="5.500" fill="#f3f3f3" /><circle cx="13" cy="12" r="1" fill="#777" /><circle cx="17" cy="12" r="1" fill="#777" /></Svg>
      <Svg w={21} h={16} className="ml-[9px] mt-[17px]"><path d="M2 0v3M6 0v3M1 3h6v3H1zM4 6v6" stroke="#000" /><path d="M7 4h12v9H5" stroke="#000" /><path d="M7 5h11v7H7zM19 6h2v4h-2z" fill="#000" /></Svg>
      <Svg w={18} h={20} className="ml-[9px] mt-[15px]"><ellipse cx="9" cy="14" rx="8" ry="8" fill="#111" /><ellipse cx="9" cy="7" rx="6" ry="7" fill="#111" /><ellipse cx="9" cy="16" rx="5" ry="5" fill="#fff" /><circle cx="7" cy="5" r="1.500" fill="#fff" /><circle cx="11" cy="5" r="1.500" fill="#fff" /><path d="M5 8h8l-4 2z" fill="#f6b11c" /><path d="M2 11h14v3H7v4H4v-5z" fill="#e5141c" /></Svg>
      <Svg w={18} h={20} className="ml-[14px] mt-[16px]"><path d="M1 18C1 8 7 2 17 1M5 18C5 10 10 6 17 5M9 18c0-5 4-8 8-8M13 18c0-2 2-4 4-4" stroke="#222" /></Svg>
      <Svg w={20} h={16} className="ml-[9px] mt-[17px]"><path d="M1 5h3l4-4v13l-4-4H1zM12 4l7 7M19 4l-7 7" stroke="#000" /></Svg>
      <time className="ml-[31px] mt-[4px] leading-[18px]">17:35</time>
      <Svg w={21} h={20} className="ml-[43px] mt-[15px]"><path d="M1 1h19v20H1z" stroke="#000" strokeWidth="1.500" /></Svg>
      <div className="ml-[24px] w-px bg-[#8ea2a8]" />
    </div>
  </nav>
);

/* ---------- title bar ---------- */

const TitleBar = () => (
  <header className="flex h-[42px] shrink-0 border-b border-[#d5d5d5] bg-white">
    <button aria-label="应用菜单" className="relative w-8 shrink-0 overflow-hidden border-r border-[#d5d5d5]">
      <svg className="absolute left-0 top-px" width="28" height="40" viewBox="0 0 28 40" fill="none" aria-hidden="true">
        <defs>
          <linearGradient id="logo" x1="0" y1="0" x2="0" y2="1"><stop stopColor="#2fc3f5" /><stop offset="1" stopColor="#0a6fd6" /></linearGradient>
        </defs>
        <rect x="-16" width="36" height="36" rx="6" fill="url(#logo)" />
        <path d="M-10 7h19l-1 5H4L2 30h-6l2-17h-8z" fill="#dff4ff" />
        <path d="M25 35v5h-5z" fill="#777" />
      </svg>
    </button>
    <div className="flex min-w-0 flex-1 flex-col">
      <div className="flex h-[18px] items-end">
        <div className="flex h-[18px] w-[557px] shrink-0 items-center pb-2 pl-[11px]">
          {quickIcons.map((q, k) => <span key={k} className={clsx('flex', q.gap)}>{q.x}</span>)}
          <Svg w={8} h={8} className="ml-[12px]"><path d="M0 1h8M0 4h8L4 8z" fill="#555" stroke="#555" /></Svg>
        </div>
        <h1 className="flex-1 whitespace-nowrap leading-[20px] text-[#222]">广联达BIM土建计量平台 GTJ2018 - [C:\Users\ajin666\Desktop\2#楼计算稿\海盐金地项目2#楼.GTJ]</h1>
        <div className="flex pb-2 pr-[17px]">
          <button aria-label="最小化" className="mr-3 flex w-[45px] justify-center"><Svg w={10} h={10}><path d="M1 7h8" stroke="#666" strokeWidth="2.500" /></Svg></button>
          <button aria-label="还原" className="flex w-5 justify-center"><Svg w={10} h={10}><path d="M1 4h6v5H1zM3 4V1h6v5H7" stroke="#666" /></Svg></button>
          <button aria-label="关闭" className="ml-[27px] flex w-3.5 justify-center"><Svg w={10} h={10}><path d="m1 0 8 8M9 0 1 8" stroke="#666" strokeWidth="2" /></Svg></button>
        </div>
      </div>
      <div className="flex h-6 items-stretch pl-[5px]">
        {ribbonTabs.map(t => (
          <button key={t} className={clsx('shrink-0 px-4', t === '工程量' ? 'ml-0.5 rounded-t-sm bg-[#5ca8f8] text-white' : 'text-[#444]')}>{t}</button>
        ))}
        <div className="relative ml-auto mt-px h-[21px] w-[306px] shrink-0">
          <input aria-label="帮助搜索" placeholder="如何布置拱过梁及拱板处的钢筋?" className="size-full border border-[#c4c4c4] pl-px text-sm placeholder:text-[#bbb]" />
          <Svg w={14} h={14} className="absolute right-2 top-[3px]"><circle cx="6" cy="6" r="5" stroke="#bbb" /><path d="m10 10 4 4" stroke="#bbb" strokeWidth="1.500" /></Svg>
        </div>
        <div className="flex items-center gap-[10px] pl-[11px] pr-[7px] text-[#8d8d8d]">
          <Svg><circle cx="10" cy="10" r="10" fill="#ccc" /><path d="M7 20v-5C3 9 6 4 10 4s7 5 3 11v5z" fill="#fff" /></Svg>
          <Svg w={18}><path d="M9 1c5 0 5 5 5 9l3 5H1l3-5c0-4 0-9 5-9zM7 17h4v2H7z" fill="currentColor" /></Svg>
          <Svg><ellipse cx="10" cy="9" rx="9" ry="7" fill="currentColor" /><path d="m7 14 2 5 5-5z" fill="currentColor" /><path d="M5 9h2M9 9h2M13 9h2" stroke="#fff" strokeWidth="2" /></Svg>
          <Svg><path d="M5 3c2-4 8-4 10 0l4 3-1 6-3 7H5l-3-7L1 6z" fill="currentColor" /><circle cx="10" cy="9" r="6" fill="#a5a5a5" stroke="#666" /><path d="M7 11c1 3 5 3 6 0M8 6v3M12 6v3" stroke="#555" /></Svg>
          <span className="flex items-center gap-px text-xl font-bold leading-5">?<Caret className="text-gray-400" /></span>
          <Svg w={18}><path d="m0 5 5-4c2 2 5 2 7 0l5 4-2 4-2-1v10H4V8L2 9z" fill="currentColor" /></Svg>
          <Svg w={18}><path d="M1 2h16v16H1z" stroke="currentColor" strokeWidth="1.500" /><path d="M1 2h16v4H1z" fill="currentColor" /><path d="M9 17v-7M6 12l3-3 3 3" stroke="currentColor" strokeWidth="1.500" /></Svg>
        </div>
      </div>
    </div>
  </header>
);

const Ribbon = () => (
  <div className="flex h-[123px] shrink-0 overflow-hidden border-b-2 border-[#9a9fa5] bg-linear-to-b from-white from-50% to-[#e6eaeb] pt-0.5">
    {ribbonGroups.map((g, k) => (
      <div key={k} className={clsx('mb-[3px] flex shrink-0 flex-col items-center border-r border-[#d3d3d3]', g.cls)}>
        <div className="flex">
          {g.items.map((it: { t: string; i: React.ReactNode; off?: boolean }) => (
            <button key={it.t} className={clsx('flex flex-col items-center px-1.5', it.off ? 'text-[#b5b5b5]' : 'text-black')}>
              <span className="flex h-[49px] items-center">{it.i}</span>
              <span className="leading-5">{it.t}</span>
            </button>
          ))}
        </div>
        <span className="mt-[27px] pl-[6px] leading-5 text-[#333]">{g.label}</span>
      </div>
    ))}
  </div>
);

function App() {
  return (
    <div className="relative flex h-screen flex-col overflow-hidden bg-white font-['Noto_Sans','Noto_Sans_CJK_SC',sans-serif] text-[15px] leading-5 text-[#222]">
      <TitleBar />
      <Ribbon />
      <div className="flex h-8 shrink-0 border-b-2 border-[#9a9fa5] bg-[#c9ccd0] pt-0.5">
        <Picker label="楼层" value="层" className="-ml-[9px] w-[110px]" />
        <Picker label="构件类型" value="板" className="w-[125px]" />
        <Picker label="构件" value="现浇板" className="w-[125px]" />
      </div>
      <div className="flex min-h-0 flex-1 border-b border-[#9a9fa5]">
        <NavPanel />
        <PropertyPanel />
        <Viewport />
      </div>
      <StatusBar />
      <TaskBar />
      <ReportDialog />
    </div>
  );
}

export default App;
